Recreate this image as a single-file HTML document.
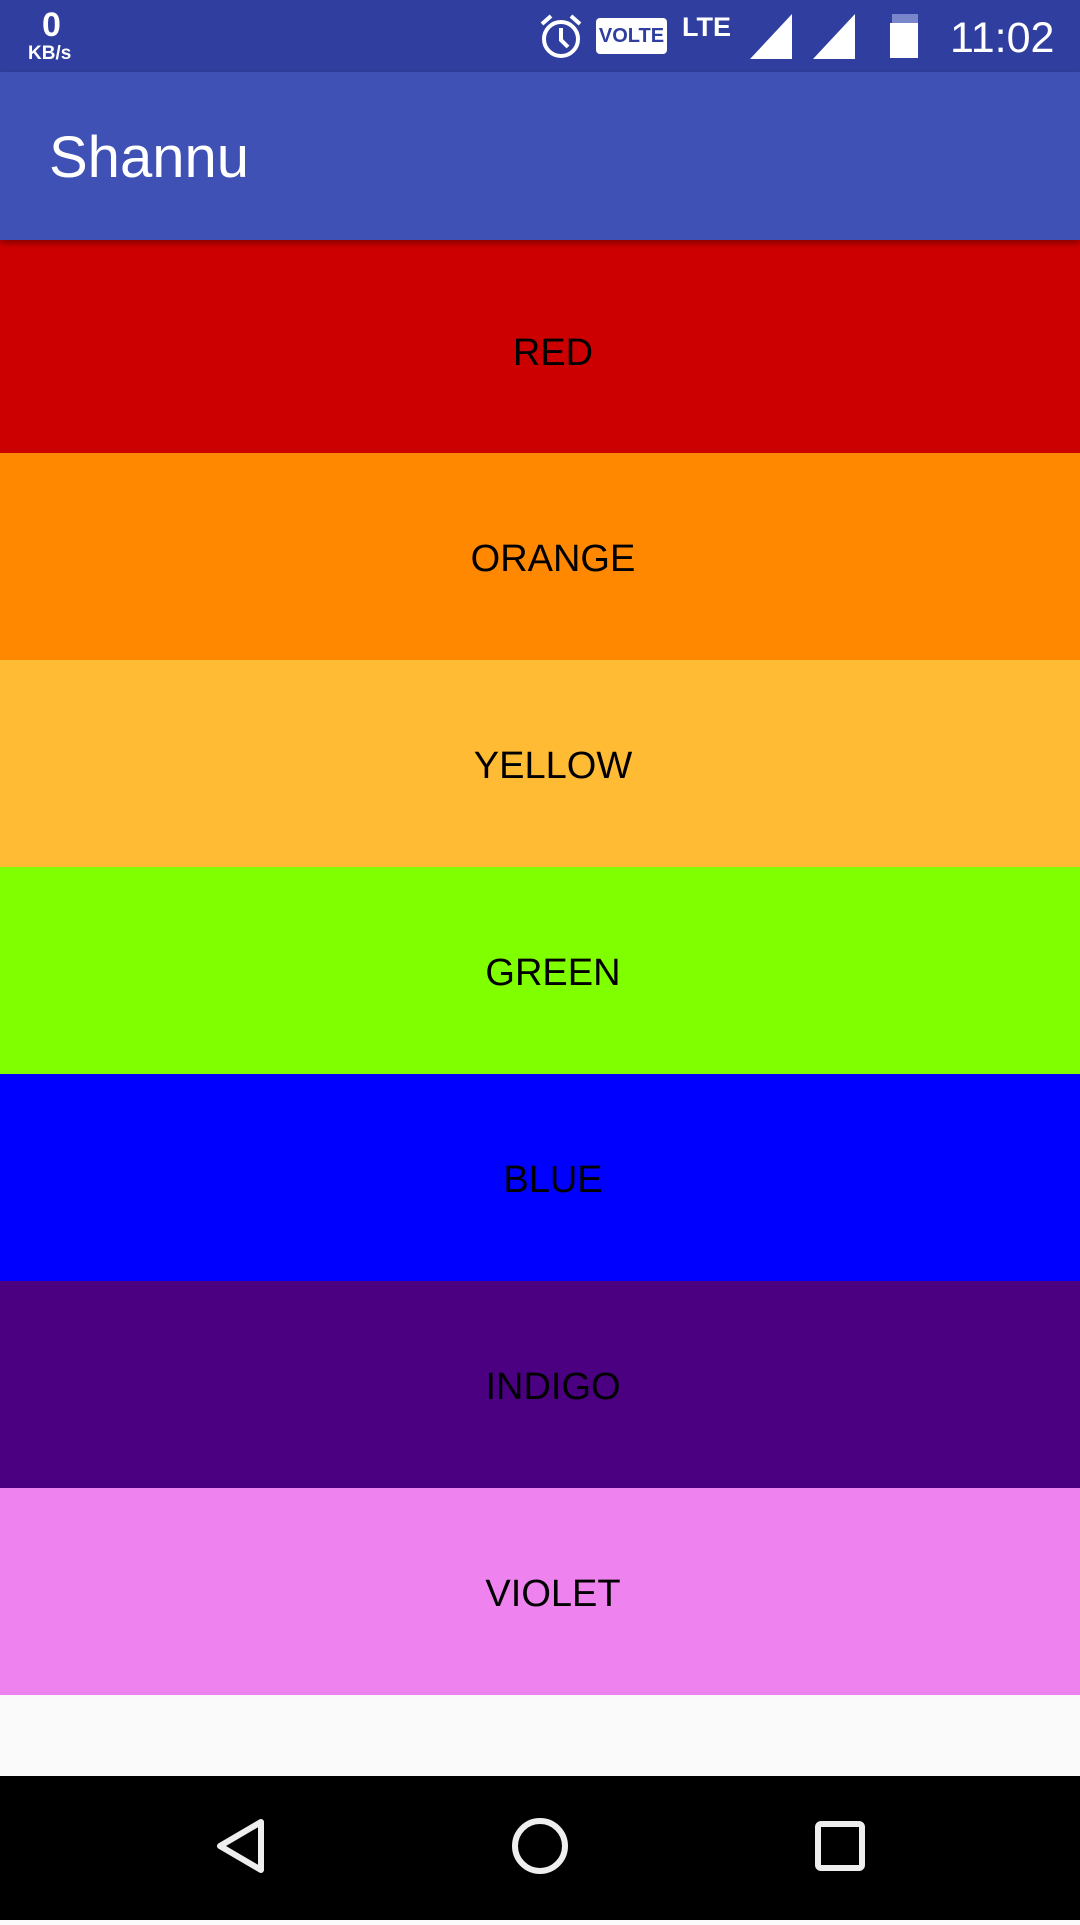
<!DOCTYPE html>
<html><head><style>
*{margin:0;padding:0;box-sizing:border-box}
body{width:1080px;height:1920px;overflow:hidden;font-family:"Liberation Sans",sans-serif;background:#fafafa;position:relative}
.sb{position:absolute;top:0;left:0;width:1080px;height:72px;background:#303f9f;color:#fff}
.ab{position:absolute;top:72px;left:0;width:1080px;height:168px;background:#3f51b5;color:#fff;font-size:58px;padding:52px 0 0 49px;z-index:2;box-shadow:0 3px 6px rgba(0,0,0,.35)}
.row{position:absolute;left:0;width:1080px;display:flex;align-items:center;justify-content:center;font-size:38px;color:#000;padding-left:26px;padding-top:6px}
.nav{position:absolute;top:1776px;left:0;width:1080px;height:144px;background:#000}
</style></head><body>
<div class="sb">
<div style="position:absolute;left:42px;top:6px;font-size:34px;font-weight:bold;">0</div>
<div style="position:absolute;left:28px;top:43px;font-size:19px;font-weight:bold;">KB/s</div>
<svg style="position:absolute;left:538px;top:12px" width="46" height="50" viewBox="0 0 46 50"><circle cx="23" cy="27" r="17" fill="none" stroke="#fff" stroke-width="4"/><path d="M23 16v12l7 7" fill="none" stroke="#fff" stroke-width="4"/><path d="M4 12l9-8M42 12l-9-8" stroke="#fff" stroke-width="4"/></svg>
<div style="position:absolute;left:596px;top:18px;width:71px;height:36px;background:#fff;border-radius:4px;color:#303f9f;font-weight:bold;font-size:20px;text-align:center;line-height:36px">VOLTE</div>
<div style="position:absolute;left:682px;top:12px;font-size:27px;font-weight:bold">LTE</div>
<svg style="position:absolute;left:750px;top:14px" width="110" height="46"><polygon points="0,45 42,45 42,0" fill="#fff"/><polygon points="63,45 105,45 105,0" fill="#fff"/></svg>
<div style="position:absolute;left:892px;top:14px;width:26px;height:9px;background:#7986cb"></div>
<div style="position:absolute;left:890px;top:23px;width:28px;height:35px;background:#fff"></div>
<div style="position:absolute;left:950px;top:14px;font-size:43px">11:02</div>
</div>
<div class="ab">Shannu</div>
<div class="row" style="top:240px;height:213px;background:#cc0000;padding-top:14px">RED</div>
<div class="row" style="top:453px;height:207px;background:#ff8800">ORANGE</div>
<div class="row" style="top:660px;height:207px;background:#ffbb33">YELLOW</div>
<div class="row" style="top:867px;height:207px;background:#7fff00">GREEN</div>
<div class="row" style="top:1074px;height:207px;background:#0000ff">BLUE</div>
<div class="row" style="top:1281px;height:207px;background:#4b0082">INDIGO</div>
<div class="row" style="top:1488px;height:207px;background:#ee82ee">VIOLET</div>
<div class="nav">
<svg width="1080" height="144"><polygon points="220,70 261,46 261,94" fill="none" stroke="#eee" stroke-width="6" stroke-linejoin="round"/><circle cx="540" cy="70" r="25" fill="none" stroke="#eee" stroke-width="6"/><rect x="818" y="48" width="44" height="44" rx="3" fill="none" stroke="#eee" stroke-width="6"/></svg>
</div>
</body></html>
